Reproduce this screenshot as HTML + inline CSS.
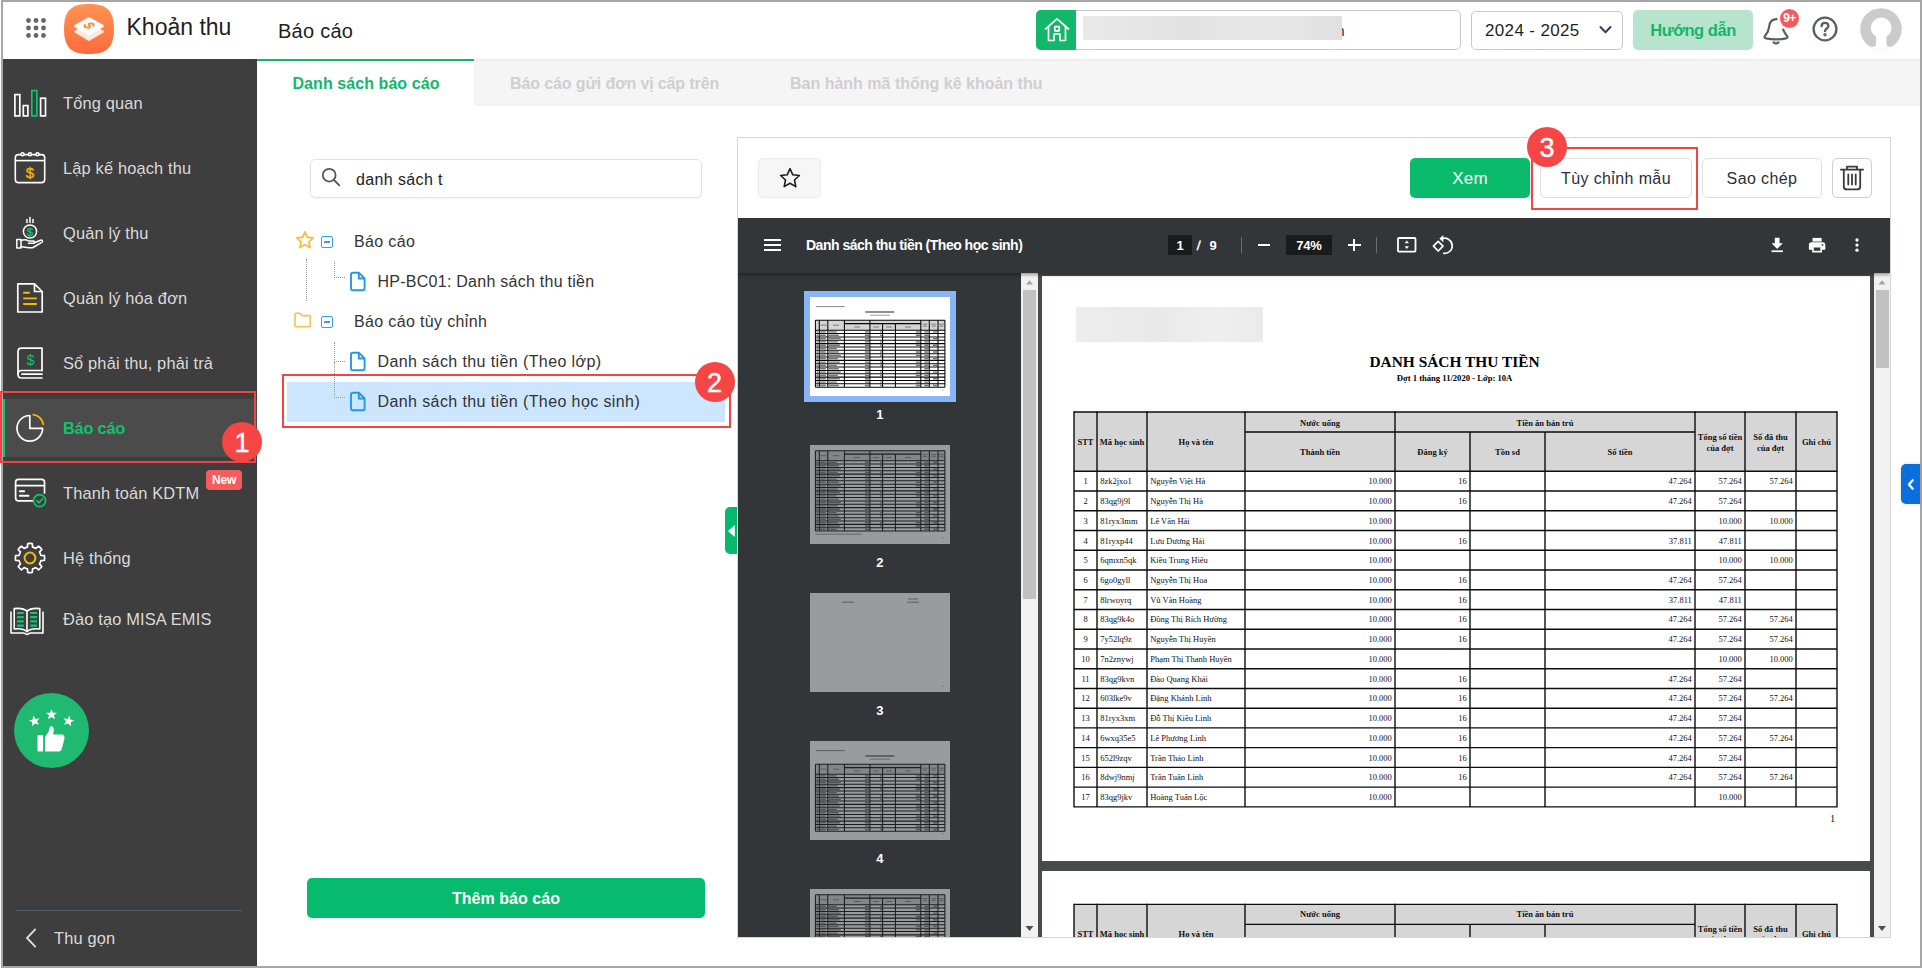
<!DOCTYPE html>
<html lang="vi">
<head>
<meta charset="utf-8">
<title>Khoản thu - Báo cáo</title>
<style>
*{box-sizing:border-box;margin:0;padding:0}
html,body{width:1922px;height:968px;overflow:hidden;background:#fff}
body{position:relative;font-family:"Liberation Sans",sans-serif;color:#212121;font-size:16px}
.abs{position:absolute}
.frame{position:absolute;background:#a6a6a6}
/* header */
#hdr{position:absolute;left:3px;top:2px;width:1917px;height:57px;background:#fff}
.t{position:absolute;white-space:nowrap;line-height:1}
/* sidebar */
#side{position:absolute;left:3px;top:59px;width:254px;height:907px;background:#3e3e3e}
.mi{position:absolute;left:60px;color:#dadada;font-size:16.4px;letter-spacing:.16px;white-space:nowrap;line-height:20px}
.ic{position:absolute}
/* tabs */
#tabs{position:absolute;left:257px;top:59px;width:1663px;height:47px;background:#f5f5f5;border-bottom:1px solid #f0f0f0;box-shadow:inset 0 3px 3px -2px rgba(0,0,0,.06)}
#tab1{position:absolute;left:0;top:0;width:217px;height:47px;background:#fff;border-top:2px solid #12b76a}
.tab{position:absolute;top:0;font-weight:bold;font-size:16px;line-height:47px;white-space:nowrap}
/* left panel */
.row{position:absolute;margin-top:1px;font-size:16px;line-height:20px;color:#333;white-space:nowrap}
.btn{position:absolute;border:1px solid #e0e0e0;border-radius:5px;background:#fff;text-align:center;font-size:16px;color:#2b2f3a;white-space:nowrap}
.red{position:absolute;border:2px solid #f24444}
.num{position:absolute;width:40px;height:40px;border-radius:50%;background:#f54545;color:#fff;text-align:center;font-size:27px;line-height:43px;-webkit-text-stroke:.45px #fff}
/* pdf */
#pdfbar{position:absolute;left:738px;top:218px;width:1152px;height:55px;background:#323639;color:#fff}
#thumbs{position:absolute;left:738px;top:273px;width:283px;height:664px;background:#323639;overflow:hidden}
#pdfmain{position:absolute;left:1038px;top:273px;width:836px;height:664px;background:#474b4e;overflow:hidden}
.sb{position:absolute;background:#f1f1f1}
.page{position:absolute;left:4px;width:828px;background:#fff;font-family:"Liberation Serif",serif;color:#000}
table.rp{position:absolute;border-collapse:collapse;table-layout:fixed;font-family:"Liberation Serif",serif;font-size:8.6px;color:#111}
table.rp td,table.rp th{border:1.5px solid #111;padding:0 3px;overflow:hidden;white-space:nowrap;line-height:10px}
table.rp th{background:#d6d6d6;font-weight:bold;text-align:center;white-space:normal}
table.rp td.r{text-align:right}
table.rp td.c{text-align:center}

.hc{position:absolute;padding-top:2px;display:flex;align-items:center;justify-content:center;text-align:center;font-weight:bold;font-size:8.5px;line-height:10.4px;color:#111}
.dc{position:absolute;margin-top:1px;height:19.74px;line-height:19.74px;font-size:8.5px;white-space:nowrap;color:#111;padding:0 3.2px}
.dc.c{text-align:center;padding:0}.dc.r{text-align:right}.dc.l{text-align:left}
.ptitle{position:absolute;left:0;width:828px;text-align:center;font-weight:bold;font-size:15.4px;line-height:18px;left:-1.5px}
.psub{position:absolute;left:-1.5px;width:828px;text-align:center;font-weight:bold;font-size:8.6px;line-height:10px}
</style>
</head>
<body>
<!-- frame -->
<div class="frame" style="left:1px;top:0;width:1921px;height:2px"></div>
<div class="frame" style="left:1px;top:0;width:2px;height:968px"></div>
<div class="frame" style="left:1920px;top:0;width:2px;height:968px"></div>
<div class="frame" style="left:1px;top:966px;width:1921px;height:2px"></div>

<div id="hdr">
<svg class="abs" style="left:21px;top:14px" width="24" height="24" viewBox="0 0 24 24" fill="#666">
<circle cx="4.5" cy="4.5" r="2.4"/><circle cx="12" cy="4.5" r="2.4"/><circle cx="19.5" cy="4.5" r="2.4"/>
<circle cx="4.5" cy="12" r="2.4"/><circle cx="12" cy="12" r="2.4"/><circle cx="19.5" cy="12" r="2.4"/>
<circle cx="4.5" cy="19.5" r="2.4"/><circle cx="12" cy="19.5" r="2.4"/><circle cx="19.5" cy="19.5" r="2.4"/>
</svg>
<svg class="abs" style="left:61px;top:2px" width="50" height="50" viewBox="0 0 50 50">
<defs><linearGradient id="og" x1="0" y1="0" x2="0" y2="1"><stop offset="0" stop-color="#ff9352"/><stop offset="1" stop-color="#ff6a3e"/></linearGradient>
<linearGradient id="wg" x1="0" y1="0" x2="0" y2="1"><stop offset="0" stop-color="#fff"/><stop offset="1" stop-color="#ffe9dc"/></linearGradient></defs>
<path d="M25 0C40 0 50 4 50 25S40 50 25 50 0 46 0 25 10 0 25 0Z" fill="url(#og)"/>
<path d="M25 20 L38.8 27.6 L25 35.8 L11.2 27.6Z" fill="#ffe9dd" stroke="#ffe9dd" stroke-width="2.2" stroke-linejoin="round"/>
<path d="M25 14.2 L38.8 22 L25 30.2 L11.2 22Z" fill="#fff" stroke="#fff" stroke-width="2.2" stroke-linejoin="round"/>
<text x="0" y="5.4" font-family="Liberation Sans, sans-serif" font-weight="bold" font-size="16" fill="#ff8a1f" text-anchor="middle" transform="translate(25.3 21.6) scale(1 .6) rotate(58)">$</text>
</svg>
<div class="t" style="left:123.5px;top:14px;font-size:23px;color:#1f1f1f">Khoản thu</div>
<div class="t" style="left:275px;top:19px;font-size:20px;letter-spacing:.25px;color:#1f1f1f">Báo cáo</div>

<!-- school selector -->
<div class="abs" style="left:1033px;top:8px;width:425px;height:40px;border:1px solid #c9c9c9;border-radius:5px;background:#fff"></div>
<div class="abs" style="left:1033px;top:8px;width:40px;height:40px;background:#12b76a;border-radius:5px 0 0 5px"></div>
<svg class="abs" style="left:1041px;top:15px" width="26" height="26" viewBox="0 0 26 26" fill="none" stroke="#fff" stroke-width="1.7" stroke-linejoin="round" stroke-linecap="round">
<path d="M1.5 12 L13 1.8 L24.5 12"/><path d="M4.5 9.8 V23.5 H10 V17 H16 V23.5 H21.500000000000004 V9.8"/><rect x="10.8" y="9.6" width="4.4" height="4.2"/>
</svg>
<div class="abs" style="left:1080px;top:14px;width:259px;height:24px;background:linear-gradient(90deg,#e9e9e9,#e2e2e2 40%,#e8e8e8 70%,#e0e0e0)"></div>
<div class="t" style="left:1339px;top:22px;font-size:14px;color:#222;width:2.5px;overflow:hidden;direction:rtl">n</div>

<!-- year -->
<div class="abs" style="left:1468px;top:9px;width:152px;height:39px;border:1px solid #c9c9c9;border-radius:5px;background:#fff"></div>
<div class="t" style="left:1482px;top:20px;font-size:17px;letter-spacing:.35px;color:#1f1f1f">2024 - 2025</div>
<svg class="abs" style="left:1596px;top:23px" width="13" height="10" viewBox="0 0 13 10" fill="none" stroke="#3c3c5a" stroke-width="2" stroke-linecap="round" stroke-linejoin="round"><path d="M1.5 2 L6.5 7.2 L11.5 2"/></svg>

<!-- guide -->
<div class="abs" style="left:1630px;top:8px;width:120px;height:40px;border-radius:5px;background:#b8e4cd"></div>
<div class="t" style="left:1630px;top:20px;width:120px;text-align:center;font-size:16.5px;font-weight:bold;color:#12b76a;letter-spacing:-.45px">Hướng dẫn</div>

<!-- bell -->
<svg class="abs" style="left:1758px;top:14px" width="30" height="32" viewBox="0 0 30 32" fill="none" stroke="#5a5e67" stroke-width="2.2" stroke-linecap="round" stroke-linejoin="round">
<path d="M15.6 3.2 C10.8 3.2 8.6 6.6 8.2 10.6 C7.8 15 6 17.6 4 20 C3.2 21 3.6 22 4.800000000000001 22.3 C11 23.6 19 23.6 25.200000000000003 22.3 C26.400000000000002 22 26.8 21 26 20 C24.5 18 23 16 22.2 13.6"/>
<path d="M12.6 26.4 C13.4 27.200000000000003 14.2 27.5 15 27.5 S16.6 27.200000000000003 17.400000000000002 26.4"/>
</svg>
<div class="abs" style="left:1777px;top:6.7px;width:19.4px;height:19.4px;border-radius:50%;background:#f8585b"></div>
<div class="t" style="left:1776.5px;top:9.5px;width:20px;text-align:center;font-size:12px;font-weight:bold;color:#fff;letter-spacing:-.6px">9+</div>

<!-- help -->
<svg class="abs" style="left:1808px;top:13px" width="28" height="28" viewBox="0 0 28 28" fill="none" stroke="#5a5e67" stroke-width="2.3" stroke-linecap="round"><circle cx="14" cy="14" r="11.4"/>
<path d="M10.6 11.2 C10.6 9.1 12.1 7.9 14 7.9 S17.4 9.1 17.4 11 C17.4 13.400000000000002 14 13.600000000000001 14 16.2"/><circle cx="14" cy="19.8" r=".6" fill="#5a5e67"/></svg>

<!-- avatar -->
<svg class="abs" style="left:1857px;top:5.5px" width="42" height="42" viewBox="0 0 42 42">
<defs><clipPath id="avc"><circle cx="21" cy="21" r="20.8"/></clipPath></defs>
<circle cx="21" cy="21" r="20.8" fill="#cbcbcb"/>
<g clip-path="url(#avc)" fill="#fff"><circle cx="21.2" cy="19.8" r="10.3"/><path d="M15.4 26 C16.6 31 16.4 35 15 40 H27.6 C26.2 35 26 31 27.2 26Z"/><rect x="0" y="38.7" width="42" height="4"/></g>
</svg>
</div>
<div id="side">
<!-- active item -->
<div class="abs" style="left:0;top:340px;width:254px;height:58px;background:#4b4b4b"></div>
<div class="abs" style="left:0;top:340px;width:1.5px;height:58px;background:#12c26d"></div>

<!-- 1 Tong quan -->
<svg class="ic" style="left:10px;top:29px" width="34" height="30" viewBox="0 0 34 30" fill="none" stroke="#fff" stroke-width="1.7">
<rect x="1.9" y="6.6" width="4.9" height="21.3"/><rect x="10.3" y="17.6" width="4.6" height="10.3"/><rect x="18.8" y="2.6" width="5" height="25.3" stroke="#12c26d"/><rect x="27.600000000000005" y="10.2" width="4.9" height="17.700000000000003"/>
</svg>
<div class="mi" style="top:34px">Tổng quan</div>

<!-- 2 Lap ke hoach thu -->
<svg class="ic" style="left:10px;top:91px" width="34" height="36" viewBox="0 0 34 36" fill="none" stroke="#fff" stroke-width="1.6">
<rect x="2.3" y="4.6" width="29.4" height="28" rx="3.2"/><path d="M2.3 10.6 H31.7"/>
<circle cx="9.5" cy="4.3" r="1.5" fill="#3e3e3e"/><circle cx="17" cy="4.3" r="1.5" fill="#3e3e3e"/><circle cx="24.5" cy="4.3" r="1.5" fill="#3e3e3e"/>
<text x="17" y="27.6" stroke="#f5b800" stroke-width=".35" fill="#f5b800" font-family="Liberation Sans, sans-serif" font-size="15" text-anchor="middle">$</text>
</svg>
<div class="mi" style="top:99px">Lập kế hoạch thu</div>

<!-- 3 Quan ly thu -->
<svg class="ic" style="left:11px;top:157px" width="32" height="34" viewBox="0 0 32 34" fill="none" stroke="#fff" stroke-width="1.5" stroke-linecap="round" stroke-linejoin="round">
<path d="M13 3.5 V6.5 M16 1.5 V6.5 M19 3.5 V6.5"/>
<circle cx="16" cy="15.5" r="6.6"/>
<text x="16" y="19.8" stroke="#12c26d" stroke-width=".3" fill="#12c26d" font-family="Liberation Sans, sans-serif" font-size="11.5" text-anchor="middle">$</text>
<rect x="2.8" y="23.5" width="4.2" height="8.5"/>
<path d="M7 24.6 C10 23.2 12.5 23.6 14.5 25 H19.5 C21 25 21 27.300000000000004 19.5 27.300000000000004 H14.5 M19.8 27 L26.5 24.2 C28.3 23.6 29.3 25.4 27.8 26.400000000000002 L19 31.5 C17 32.4 13 31.2 7 30.8"/>
</svg>
<div class="mi" style="top:164px">Quản lý thu</div>

<!-- 4 Quan ly hoa don -->
<svg class="ic" style="left:12px;top:222px" width="30" height="34" viewBox="0 0 30 34" fill="none" stroke="#fff" stroke-width="1.7" stroke-linejoin="round">
<path d="M2.8 2.8 H19.5 L27.200000000000003 10.5 V31 H2.8Z"/><path d="M19.5 2.8 V10.5 H27.200000000000003"/>
<path d="M8.2 11.8 H14.8 M8.2 17.4 H21.8 M8.2 23 H21.8" stroke="#f5b800" stroke-width="1.9"/>
</svg>
<div class="mi" style="top:229px">Quản lý hóa đơn</div>

<!-- 5 So phai thu -->
<svg class="ic" style="left:12px;top:286px" width="30" height="36" viewBox="0 0 30 36" fill="none" stroke="#fff" stroke-width="1.7" stroke-linejoin="round" stroke-linecap="round">
<path d="M27 25.5 V3.2 H6.5 C4.5 3.2 3 4.7 3 6.7 V29"/>
<path d="M27 25.5 H6.5 C1.8 25.5 1.8 33 6.5 33 H27 M27 29.2 H7"/>
<text x="15.5" y="19.5" stroke="none" fill="#12c26d" font-family="Liberation Sans, sans-serif" font-size="14.5" text-anchor="middle">$</text>
</svg>
<div class="mi" style="top:294px">Sổ phải thu, phải trả</div>

<!-- 6 Bao cao -->
<svg class="ic" style="left:11px;top:353px" width="32" height="32" viewBox="0 0 32 32" fill="none" stroke="#fff" stroke-width="1.7" stroke-linecap="round" stroke-linejoin="round">
<path d="M15.8 3.5 A12.8 12.8 0 1 0 28.6 16.3 H15.8 Z"/>
<path d="M19.3 2.6 A12.4 12.4 0 0 1 29.3 12.2" stroke="#f5b800"/>
</svg>
<div class="mi" style="top:359px;color:#12c26d;font-weight:bold;letter-spacing:-.25px">Báo cáo</div>

<!-- 7 Thanh toan KDTM -->
<svg class="ic" style="left:10px;top:417px" width="36" height="34" viewBox="0 0 36 34" fill="none" stroke="#fff" stroke-width="1.7" stroke-linecap="round" stroke-linejoin="round">
<path d="M23 24.8 H5.5 C3.8 24.8 2.6 23.6 2.6 22 V6.2 C2.6 4.6 3.8 3.4 5.5 3.4 H28.6 C30.200000000000003 3.4 31.5 4.6 31.5 6.2 V17"/>
<path d="M2.6 9.6 H31.5"/><path d="M6.8 15.2 H11.2 M6.8 19.8 H15.5" stroke-width="1.9"/>
<circle cx="26.6" cy="24.6" r="6" stroke="#12c26d" fill="#3e3e3e"/><path d="M23.8 24.6 L26 26.8 L29.6 22.8" stroke="#12c26d"/>
</svg>
<div class="mi" style="top:424px">Thanh toán KDTM</div>
<div class="abs" style="left:203px;top:411px;width:36px;height:20px;border-radius:4px;background:#f35d5d"></div>
<div class="t" style="left:203px;top:415px;width:36px;text-align:center;font-size:12px;color:#fff;font-weight:bold;letter-spacing:-.2px">New</div>

<!-- 8 He thong -->
<svg class="ic" style="left:10px;top:482px" width="34" height="34" viewBox="0 0 34 34" fill="none" stroke="#fff" stroke-width="1.7" stroke-linejoin="round">
<path d="M14.39 6.11L14.72 2.58A14.6 14.6 0 0 1 19.28 2.58L19.61 6.11A11.2 11.2 0 0 1 22.85 7.45L25.58 5.19A14.6 14.6 0 0 1 28.81 8.42L26.55 11.15A11.2 11.2 0 0 1 27.89 14.39L31.42 14.72A14.6 14.6 0 0 1 31.42 19.28L27.89 19.61A11.2 11.2 0 0 1 26.55 22.85L28.81 25.58A14.6 14.6 0 0 1 25.58 28.81L22.85 26.55A11.2 11.2 0 0 1 19.61 27.89L19.28 31.42A14.6 14.6 0 0 1 14.72 31.42L14.39 27.89A11.2 11.2 0 0 1 11.15 26.55L8.42 28.81A14.6 14.6 0 0 1 5.19 25.58L7.45 22.85A11.2 11.2 0 0 1 6.11 19.61L2.58 19.28A14.6 14.6 0 0 1 2.58 14.72L6.11 14.39A11.2 11.2 0 0 1 7.45 11.15L5.19 8.42A14.6 14.6 0 0 1 8.42 5.19L11.15 7.45A11.2 11.2 0 0 1 14.39 6.11Z"/>
<circle cx="17" cy="17" r="5.4" stroke="#f5b800" stroke-width="2"/>
</svg>
<div class="mi" style="top:489px">Hệ thống</div>

<!-- 9 Dao tao -->
<svg class="ic" style="left:6px;top:547px" width="36" height="30" viewBox="0 0 36 30" fill="none" stroke="#fff" stroke-width="1.6" stroke-linejoin="round">
<path d="M2 5.5 V27 H14.5 C16 27 16.5 28.400000000000002 18 28.400000000000002 S20 27 21.5 27 H34 V5.5"/>
<path d="M18 5.200000000000001 C15 2.4 10 2 5.2 2.6 V23 C10 22.4 15 22.8 18 25.6 C21 22.8 26 22.4 30.8 23 V2.6 C26 2 21 2.4 18 5.200000000000001 Z M18 5.200000000000001 V25.6"/>
<path d="M8 7 H14.8 M8 11.2 H14.8 M8 15.4 H14.8 M8 19.6 H14.8 M21.2 7 H28 M21.2 11.2 H28 M21.2 15.4 H28 M21.2 19.6 H28" stroke="#12c26d" stroke-width="2.2"/>
</svg>
<div class="mi" style="top:550px">Đào tạo MISA EMIS</div>

<!-- feedback -->
<div class="abs" style="left:11px;top:634px;width:75px;height:75px;border-radius:50%;background:#1fb971"></div>
<svg class="abs" style="left:11px;top:634px" width="75" height="75" viewBox="0 0 75 75" fill="#fff">
<g id="st"><path d="M0 -5.6 L1.5 -1.8 L5.5 -1.7 L2.4 0.8 L3.5 4.7 L0 2.5 L-3.5 4.7 L-2.4 0.8 L-5.5 -1.7 L-1.5 -1.8Z" transform="translate(37.5 21.5)"/></g>
<path d="M0 -5.6 L1.5 -1.8 L5.5 -1.7 L2.4 0.8 L3.5 4.7 L0 2.5 L-3.5 4.7 L-2.4 0.8 L-5.5 -1.7 L-1.5 -1.8Z" transform="translate(20.5 28) rotate(-12)"/>
<path d="M0 -5.6 L1.5 -1.8 L5.5 -1.7 L2.4 0.8 L3.5 4.7 L0 2.5 L-3.5 4.7 L-2.4 0.8 L-5.500000000000001 -1.7 L-1.5 -1.8Z" transform="translate(54.5 28) rotate(12)"/>
<rect x="23.5" y="42" width="5.6" height="16.5" rx="1"/>
<path d="M31 58.5 V43.5 C33.5 41 35 38 35.800000000000004 34.5 C36.2 32.6 39.6 33 39.800000000000004 36 C39.900000000000006 38 39.5 40 39 41.6 H47.5 C50 41.6 51 43.800000000000004 50.400000000000006 45.800000000000004 L47.800000000000004 56 C47.400000000000006 57.6 46.2 58.5 44.5 58.5Z"/>
</svg>

<!-- divider + collapse -->
<div class="abs" style="left:13px;top:851px;width:226px;height:1px;background:#4e6072"></div>
<svg class="abs" style="left:21px;top:868px" width="14" height="22" viewBox="0 0 14 22" fill="none" stroke="#d9d9e3" stroke-width="1.9" stroke-linecap="square"><path d="M11 2.6 L3 11 L11 19.400000000000002"/></svg>
<div class="mi" style="left:51px;top:869px">Thu gọn</div>
</div>
<div id="tabs"><div id="tab1"></div>
<div class="tab" style="left:35.5px;color:#12b76a;letter-spacing:.07px;top:.5px">Danh sách báo cáo</div>
<div class="tab" style="left:253px;color:#cfcfcf;letter-spacing:-.12px;top:.5px">Báo cáo gửi đơn vị cấp trên</div>
<div class="tab" style="left:533px;color:#cfcfcf;top:.5px">Ban hành mã thống kê khoản thu</div>
</div>

<!-- LEFT PANEL -->
<div class="abs" style="left:310px;top:159px;width:392px;height:39px;border:1px solid #e3e3e3;border-radius:5px;background:#fff;box-shadow:0 1px 2px rgba(0,0,0,.05)"></div>
<svg class="abs" style="left:320px;top:166px" width="22" height="22" viewBox="0 0 22 22" fill="none" stroke="#555" stroke-width="1.8" stroke-linecap="round"><circle cx="9.2" cy="9.2" r="6.4"/><path d="M14 14 L19.3 19.3"/></svg>
<div class="row" style="left:356px;top:169px;letter-spacing:.38px;color:#222">danh sách t</div>

<!-- tree -->
<svg class="abs" style="left:295px;top:230px" width="20" height="20" viewBox="0 0 22 22" fill="none" stroke="#f7bd45" stroke-width="2" stroke-linejoin="round"><path d="M11 2.2 L13.7 8 L20 8.7 L15.3 13 L16.6 19.3 L11 16.1 L5.4 19.3 L6.7 13 L2 8.7 L8.3 8Z"/></svg>
<div class="abs" style="left:321px;top:236px;width:11.5px;height:11.5px;border:1.6px solid #3b9de8;border-radius:2px"></div>
<div class="abs" style="left:323.6px;top:241px;width:6.3px;height:1.6px;background:#3b9de8"></div>
<div class="row" style="left:354px;top:231px;letter-spacing:.35px">Báo cáo</div>

<div class="abs" style="left:306px;top:259px;width:0;height:42px;border-left:1px dotted #999"></div>
<div class="abs" style="left:333.5px;top:261px;width:11px;height:17px;border-left:1px dotted #999;border-bottom:1px dotted #999"></div>
<svg class="abs doc" style="left:349px;top:271px" width="18" height="21" viewBox="0 0 18 21" fill="none" stroke="#2196f3" stroke-width="1.9" stroke-linejoin="round"><path d="M2 3.4 C2 2.4 2.7 1.7 3.7 1.7 H9.8 L15.6 7.5 V17.6 C15.6 18.6 14.9 19.3 13.9 19.3 H3.7 C2.7 19.3 2 18.6 2 17.6Z"/><path d="M9.8 1.7 V7.5 H15.6"/></svg>
<div class="row" style="left:377.5px;top:271px;letter-spacing:.26px">HP-BC01: Danh sách thu tiền</div>

<svg class="abs" style="left:293px;top:311px" width="20" height="18" viewBox="0 0 20 18" fill="none" stroke="#f7c04a" stroke-width="1.6" stroke-linejoin="round"><path d="M2 3.2 C2 2.6 2.5 2.2 3 2.2 H7 L9 4.6 H16.3 C16.9 4.6 17.3 5 17.3 5.6 V14.8 C17.3 15.4 16.9 15.8 16.3 15.8 H3 C2.4 15.8 2 15.4 2 14.8Z"/></svg>
<div class="abs" style="left:321px;top:316px;width:11.5px;height:11.5px;border:1.6px solid #3b9de8;border-radius:2px"></div>
<div class="abs" style="left:323.6px;top:321px;width:6.3px;height:1.6px;background:#3b9de8"></div>
<div class="row" style="left:354px;top:311px;letter-spacing:.35px">Báo cáo tùy chỉnh</div>

<div class="abs" style="left:287px;top:382px;width:438px;height:40px;background:#cce6ff"></div>
<div class="abs" style="left:333.5px;top:342px;width:11px;height:20px;border-left:1px dotted #999;border-bottom:1px dotted #999"></div>
<div class="abs" style="left:333.5px;top:362px;width:11px;height:36px;border-left:1px dotted #999;border-bottom:1px dotted #999"></div>
<svg class="abs doc" style="left:349px;top:351px" width="18" height="21" viewBox="0 0 18 21" fill="none" stroke="#2196f3" stroke-width="1.9" stroke-linejoin="round"><path d="M2 3.4 C2 2.4 2.7 1.7 3.7 1.7 H9.8 L15.6 7.5 V17.6 C15.6 18.6 14.9 19.3 13.9 19.3 H3.7 C2.7 19.3 2 18.6 2 17.6Z"/><path d="M9.8 1.7 V7.5 H15.6"/></svg>
<div class="row" style="left:377.5px;top:351px;letter-spacing:.4px">Danh sách thu tiền (Theo lớp)</div>
<svg class="abs doc" style="left:349px;top:391px" width="18" height="21" viewBox="0 0 18 21" fill="none" stroke="#2196f3" stroke-width="1.9" stroke-linejoin="round"><path d="M2 3.4 C2 2.4 2.7 1.7 3.7 1.7 H9.8 L15.6 7.5 V17.6 C15.6 18.6 14.9 19.3 13.9 19.3 H3.7 C2.7 19.3 2 18.6 2 17.6Z"/><path d="M9.8 1.7 V7.5 H15.6"/></svg>
<div class="row" style="left:377.5px;top:391px;letter-spacing:.4px">Danh sách thu tiền (Theo học sinh)</div>

<div class="abs" style="left:307px;top:878px;width:398px;height:40px;border-radius:5px;background:#06bb6e"></div>
<div class="t" style="left:307px;top:891px;width:398px;text-align:center;font-size:16px;font-weight:bold;color:#fff;letter-spacing:.05px">Thêm báo cáo</div>

<!-- splitter handle -->
<div class="abs" style="left:725px;top:507px;width:12.5px;height:47px;border-radius:5px 0 0 5px;background:#06b96f"></div>
<svg class="abs" style="left:727px;top:524px" width="9" height="14" viewBox="0 0 9 14"><path d="M7.800000000000001 1 V13 L1 7Z" fill="#fff"/></svg>

<!-- annotations left -->
<div class="red" style="left:0;top:391px;width:256px;height:72px"></div>
<div class="num" style="left:222px;top:421.5px">1</div>
<div class="red" style="left:282px;top:373.5px;width:449px;height:54px"></div>
<div class="num" style="left:694.5px;top:362px">2</div>

<!-- RIGHT PANEL -->
<div id="rp">
<div class="abs" style="left:737px;top:137px;width:1154px;height:801px;border:1px solid #d6d6d6;background:#fff"></div>
<div class="btn" style="left:758px;top:158px;width:63px;height:40px;background:#f6f6f6;border-color:#ebebeb"></div>
<svg class="abs" style="left:778px;top:166px" width="24" height="24" viewBox="0 0 24 24" fill="none" stroke="#1d1d1d" stroke-width="1.6" stroke-linejoin="round"><path d="M12 2.7 L14.800000000000001 8.8 L21.400000000000002 9.5 L16.5 14 L17.8 20.6 L12 17.3 L6.2 20.6 L7.5 14 L2.6 9.5 L9.2 8.8Z"/></svg>

<div class="abs" style="left:1410px;top:158px;width:120px;height:40px;border-radius:5px;background:#0abb6c"></div>
<div class="t" style="left:1410px;top:170px;width:120px;text-align:center;color:#fff;font-size:17px;letter-spacing:.2px">Xem</div>
<div class="btn" style="left:1540px;top:158px;width:152px;height:40px;line-height:40px;letter-spacing:.38px">Tùy chỉnh mẫu</div>
<div class="btn" style="left:1702px;top:158px;width:120px;height:40px;line-height:40px;letter-spacing:.4px">Sao chép</div>
<div class="btn" style="left:1832px;top:158px;width:40px;height:40px;border-color:#cfcfcf"></div>
<svg class="abs" style="left:1839px;top:164px" width="26" height="28" viewBox="0 0 26 28" fill="none" stroke="#3a3a3a" stroke-width="1.8" stroke-linecap="round" stroke-linejoin="round"><path d="M1.8 5.6 H24.2"/><path d="M8 5.2 V2.6 H18 V5.2"/><path d="M4.8 5.8 V22.4 C4.8 24.4 6 25.4 7.800000000000001 25.4 H18.2 C20 25.4 21.200000000000003 24.4 21.200000000000003 22.4 V5.8"/><path d="M9.3 10.4 V20.6 M13 10.4 V20.6 M16.7 10.4 V20.6"/></svg>

<!-- pdf toolbar -->
<div id="pdfbar" style="box-shadow:0 2px 3px rgba(0,0,0,.35);z-index:3;clip-path:inset(0 0 -6px 0)">
<div class="abs" style="left:26px;top:21px;width:16.5px;height:2px;background:#fff;box-shadow:0 5px 0 #fff,0 10px 0 #fff"></div>
<div class="t" style="left:68px;top:20px;font-size:14px;font-weight:bold;letter-spacing:-.5px;color:#fff">Danh sách thu tiền (Theo học sinh)</div>
<div class="abs" style="left:430px;top:17px;width:24px;height:20px;background:#191b1c"></div>
<div class="t" style="left:430px;top:21px;width:24px;text-align:center;font-size:13px;font-weight:bold">1</div>
<div class="t" style="left:458.5px;top:21px;font-size:13px;font-weight:bold;transform:skewX(-8deg)">/</div><div class="t" style="left:471.5px;top:21px;font-size:13px;font-weight:bold">9</div>
<div class="abs" style="left:503px;top:19px;width:1px;height:16px;background:#6b6e70"></div>
<div class="abs" style="left:520px;top:26.2px;width:12px;height:1.7px;background:#fff"></div>
<div class="abs" style="left:548px;top:17px;width:46px;height:20px;background:#191b1c"></div>
<div class="t" style="left:548px;top:21px;width:46px;text-align:center;font-size:13px;font-weight:bold;letter-spacing:-.2px">74%</div>
<div class="abs" style="left:610px;top:26.2px;width:12.5px;height:1.7px;background:#fff"></div>
<div class="abs" style="left:615.4px;top:20.8px;width:1.7px;height:12.5px;background:#fff"></div>
<div class="abs" style="left:638px;top:19px;width:1px;height:16px;background:#6b6e70"></div>
<svg class="abs" style="left:658px;top:18px" width="22" height="18" viewBox="0 0 22 18" fill="none" stroke="#fff" stroke-width="1.8" stroke-linejoin="round"><rect x="2" y="2" width="17.5" height="13.6" rx="1"/><path d="M10.8 4.6 L13 7.3 H8.6Z M10.8 13 L13 10.3 H8.6Z" fill="#fff" stroke="none"/></svg>
<svg class="abs" style="left:693px;top:16px" width="22" height="22" viewBox="0 0 22 22" fill="none" stroke="#fff" stroke-width="1.7" stroke-linejoin="round"><path d="M7.2 7.400000000000001 L12 12.2 L7.2 17 L2.4 12.2Z"/><path d="M11.3 4.6 A7.6 7.6 0 1 1 12.8 19.400000000000002" stroke-linecap="round"/><path d="M12.3 1 V8.2 L8.4 4.6Z" fill="#fff" stroke="none"/></svg>
<svg class="abs" style="left:1030.8px;top:18px" width="16.4" height="18.2" viewBox="0 0 18 20" fill="#fff"><path d="M6.4 2 H11.6 V8 H15.2 L9 14.2 L2.8 8 H6.4Z"/><rect x="2.8" y="15.8" width="12.4" height="1.9"/></svg>
<svg class="abs" style="left:1069.8px;top:18.6px" width="18.2" height="16.4" viewBox="0 0 20 18" fill="#fff"><rect x="5" y="1" width="10" height="4"/><path d="M3.6 5.800000000000001 H16.4 C18 5.800000000000001 19 6.800000000000001 19 8.4 V14 H15.4 V17 H4.6 V14 H1 V8.4 C1 6.800000000000001 2 5.800000000000001 3.6 5.800000000000001Z M6.4 11.6 V15.2 H13.6 V11.6Z M15.9 7.7 A1 1 0 1 0 15.9 9.7 A1 1 0 1 0 15.9 7.7Z" fill-rule="evenodd"/></svg>
<svg class="abs" style="left:1115px;top:18px" width="8" height="20" viewBox="0 0 8 20" fill="#fff"><circle cx="4" cy="4" r="1.65"/><circle cx="4" cy="9.1" r="1.65"/><circle cx="4" cy="14.2" r="1.65"/></svg>
</div>

<div id="thumbs">
<div class="abs" style="left:66px;top:17.8px;width:152px;height:111px;background:#8ab4f8"></div><div class="abs" style="left:71.8px;top:23.7px;width:140.5px;height:99px;"><svg class="abs" style="left:0;top:0" width="140.5" height="99" viewBox="0 0 140.5 99" fill="none"><rect width="140.5" height="99" fill="#fff"/><path d="M5.7 9.6 H34.7" stroke="#555" stroke-width=".7"/><path d="M55.3 15 H84.3" stroke="#333" stroke-width="1.1"/><path d="M60 18.2 H80" stroke="#777" stroke-width=".7"/><rect x="5.4" y="23.2" width="129.5" height="10.0" fill="#d4d4d4"/><path d="M6.4 34.88 H8.3 M10.1 34.88 H15.8 M18.6 34.88 H26.8 M54.9 34.88 H59.1 M70.1 34.88 H71.8 M105.8 34.88 H110.0 M114.3 34.88 H118.5 M123.0 34.88 H127.2 M6.4 38.23 H8.3 M10.1 38.23 H15.8 M18.6 38.23 H28.8 M54.9 38.23 H59.1 M70.1 38.23 H71.8 M105.8 38.23 H110.0 M114.3 38.23 H118.5 M6.4 41.58 H8.3 M10.1 41.58 H15.8 M18.6 41.58 H30.8 M54.9 41.58 H59.1 M114.3 41.58 H118.5 M123.0 41.58 H127.2 M6.4 44.92 H8.3 M10.1 44.92 H15.8 M18.6 44.92 H27.8 M54.9 44.92 H59.1 M70.1 44.92 H71.8 M105.8 44.92 H110.0 M114.3 44.92 H118.5 M6.4 48.27 H8.3 M10.1 48.27 H15.8 M18.6 48.27 H29.8 M54.9 48.27 H59.1 M70.1 48.27 H71.8 M105.8 48.27 H110.0 M114.3 48.27 H118.5 M123.0 48.27 H127.2 M6.4 51.62 H8.3 M10.1 51.62 H15.8 M18.6 51.62 H26.8 M54.9 51.62 H59.1 M114.3 51.62 H118.5 M6.4 54.98 H8.3 M10.1 54.98 H15.8 M18.6 54.98 H28.8 M54.9 54.98 H59.1 M70.1 54.98 H71.8 M105.8 54.98 H110.0 M114.3 54.98 H118.5 M123.0 54.98 H127.2 M6.4 58.33 H8.3 M10.1 58.33 H15.8 M18.6 58.33 H30.8 M54.9 58.33 H59.1 M70.1 58.33 H71.8 M105.8 58.33 H110.0 M114.3 58.33 H118.5 M6.4 61.67 H8.3 M10.1 61.67 H15.8 M18.6 61.67 H27.8 M54.9 61.67 H59.1 M114.3 61.67 H118.5 M123.0 61.67 H127.2 M6.4 65.03 H8.3 M10.1 65.03 H15.8 M18.6 65.03 H29.8 M54.9 65.03 H59.1 M70.1 65.03 H71.8 M105.8 65.03 H110.0 M114.3 65.03 H118.5 M6.4 68.38 H8.3 M10.1 68.38 H15.8 M18.6 68.38 H26.8 M54.9 68.38 H59.1 M70.1 68.38 H71.8 M105.8 68.38 H110.0 M114.3 68.38 H118.5 M123.0 68.38 H127.2 M6.4 71.73 H8.3 M10.1 71.73 H15.8 M18.6 71.73 H28.8 M54.9 71.73 H59.1 M114.3 71.73 H118.5 M6.4 75.08 H8.3 M10.1 75.08 H15.8 M18.6 75.08 H30.8 M54.9 75.08 H59.1 M70.1 75.08 H71.8 M105.8 75.08 H110.0 M114.3 75.08 H118.5 M123.0 75.08 H127.2 M6.4 78.42 H8.3 M10.1 78.42 H15.8 M18.6 78.42 H27.8 M54.9 78.42 H59.1 M70.1 78.42 H71.8 M105.8 78.42 H110.0 M114.3 78.42 H118.5 M6.4 81.77 H8.3 M10.1 81.77 H15.8 M18.6 81.77 H29.8 M54.9 81.77 H59.1 M114.3 81.77 H118.5 M123.0 81.77 H127.2 M6.4 85.12 H8.3 M10.1 85.12 H15.8 M18.6 85.12 H26.8 M54.9 85.12 H59.1 M70.1 85.12 H71.8 M105.8 85.12 H110.0 M114.3 85.12 H118.5 M6.4 88.48 H8.3 M10.1 88.48 H15.8 M18.6 88.48 H28.8 M54.9 88.48 H59.1 M70.1 88.48 H71.8 M105.8 88.48 H110.0 M114.3 88.48 H118.5 M123.0 88.48 H127.2" stroke="#777" stroke-width="1.3"/><path d="M10.6 28.2 H16.6 M23.1 28.2 H29.1 M44.1 30.0 H50.1 M63.2 30.0 H69.2 M76.0 30.0 H82.0 M95.1 30.0 H101.1 M112.5 27.2 H117.5 M113.0 29.2 H117.0 M121.2 27.2 H126.2 M121.7 29.2 H125.7 M128.9 27.2 H133.9 M129.4 29.2 H133.4" stroke="#666" stroke-width=".8"/><path d="M5.4 23.2 H134.9 M34.4 26.599999999999998 H110.8 M5.4 33.20 H134.9 M5.4 36.55 H134.9 M5.4 39.90 H134.9 M5.4 43.25 H134.9 M5.4 46.60 H134.9 M5.4 49.95 H134.9 M5.4 53.30 H134.9 M5.4 56.65 H134.9 M5.4 60.00 H134.9 M5.4 63.35 H134.9 M5.4 66.70 H134.9 M5.4 70.05 H134.9 M5.4 73.40 H134.9 M5.4 76.75 H134.9 M5.4 80.10 H134.9 M5.4 83.45 H134.9 M5.4 86.80 H134.9 M5.4 90.15 H134.9 M5.4 23.20 V90.15 M9.3 23.20 V90.15 M17.8 23.20 V90.15 M34.4 23.20 V90.15 M59.9 23.20 V90.15 M72.6 26.60 V90.15 M85.4 26.60 V90.15 M110.8 23.20 V90.15 M119.3 23.20 V90.15 M128 23.20 V90.15 M134.9 23.20 V90.15" stroke="#050505" stroke-width="1.05"/><path d="M132 93 H133.5" stroke="#888" stroke-width=".7"/></svg></div><div class="t" style="left:71.8px;top:135.2px;width:140.5px;text-align:center;color:#fff;font-size:13px;font-weight:bold;letter-spacing:.3px">1</div><div class="abs" style="left:71.8px;top:171.5px;width:140.5px;height:99px;opacity:.5;"><svg class="abs" style="left:0;top:0" width="140.5" height="99" viewBox="0 0 140.5 99" fill="none"><rect width="140.5" height="99" fill="#fff"/><rect x="5.4" y="5.7" width="129.5" height="10.0" fill="#d4d4d4"/><path d="M6.4 17.38 H8.3 M10.1 17.38 H15.8 M18.6 17.38 H26.8 M54.9 17.38 H59.1 M70.1 17.38 H71.8 M105.8 17.38 H110.0 M114.3 17.38 H118.5 M123.0 17.38 H127.2 M6.4 20.73 H8.3 M10.1 20.73 H15.8 M18.6 20.73 H28.8 M54.9 20.73 H59.1 M70.1 20.73 H71.8 M105.8 20.73 H110.0 M114.3 20.73 H118.5 M6.4 24.07 H8.3 M10.1 24.07 H15.8 M18.6 24.07 H30.8 M54.9 24.07 H59.1 M114.3 24.07 H118.5 M123.0 24.07 H127.2 M6.4 27.43 H8.3 M10.1 27.43 H15.8 M18.6 27.43 H27.8 M54.9 27.43 H59.1 M70.1 27.43 H71.8 M105.8 27.43 H110.0 M114.3 27.43 H118.5 M6.4 30.78 H8.3 M10.1 30.78 H15.8 M18.6 30.78 H29.8 M54.9 30.78 H59.1 M70.1 30.78 H71.8 M105.8 30.78 H110.0 M114.3 30.78 H118.5 M123.0 30.78 H127.2 M6.4 34.12 H8.3 M10.1 34.12 H15.8 M18.6 34.12 H26.8 M54.9 34.12 H59.1 M114.3 34.12 H118.5 M6.4 37.47 H8.3 M10.1 37.47 H15.8 M18.6 37.47 H28.8 M54.9 37.47 H59.1 M70.1 37.47 H71.8 M105.8 37.47 H110.0 M114.3 37.47 H118.5 M123.0 37.47 H127.2 M6.4 40.82 H8.3 M10.1 40.82 H15.8 M18.6 40.82 H30.8 M54.9 40.82 H59.1 M70.1 40.82 H71.8 M105.8 40.82 H110.0 M114.3 40.82 H118.5 M6.4 44.17 H8.3 M10.1 44.17 H15.8 M18.6 44.17 H27.8 M54.9 44.17 H59.1 M114.3 44.17 H118.5 M123.0 44.17 H127.2 M6.4 47.52 H8.3 M10.1 47.52 H15.8 M18.6 47.52 H29.8 M54.9 47.52 H59.1 M70.1 47.52 H71.8 M105.8 47.52 H110.0 M114.3 47.52 H118.5 M6.4 50.88 H8.3 M10.1 50.88 H15.8 M18.6 50.88 H26.8 M54.9 50.88 H59.1 M70.1 50.88 H71.8 M105.8 50.88 H110.0 M114.3 50.88 H118.5 M123.0 50.88 H127.2 M6.4 54.22 H8.3 M10.1 54.22 H15.8 M18.6 54.22 H28.8 M54.9 54.22 H59.1 M114.3 54.22 H118.5 M6.4 57.58 H8.3 M10.1 57.58 H15.8 M18.6 57.58 H30.8 M54.9 57.58 H59.1 M70.1 57.58 H71.8 M105.8 57.58 H110.0 M114.3 57.58 H118.5 M123.0 57.58 H127.2 M6.4 60.92 H8.3 M10.1 60.92 H15.8 M18.6 60.92 H27.8 M54.9 60.92 H59.1 M70.1 60.92 H71.8 M105.8 60.92 H110.0 M114.3 60.92 H118.5 M6.4 64.27 H8.3 M10.1 64.27 H15.8 M18.6 64.27 H29.8 M54.9 64.27 H59.1 M114.3 64.27 H118.5 M123.0 64.27 H127.2 M6.4 67.62 H8.3 M10.1 67.62 H15.8 M18.6 67.62 H26.8 M54.9 67.62 H59.1 M70.1 67.62 H71.8 M105.8 67.62 H110.0 M114.3 67.62 H118.5 M6.4 70.97 H8.3 M10.1 70.97 H15.8 M18.6 70.97 H28.8 M54.9 70.97 H59.1 M70.1 70.97 H71.8 M105.8 70.97 H110.0 M114.3 70.97 H118.5 M123.0 70.97 H127.2 M6.4 74.33 H8.3 M10.1 74.33 H15.8 M18.6 74.33 H30.8 M54.9 74.33 H59.1 M114.3 74.33 H118.5 M6.4 77.67 H8.3 M10.1 77.67 H15.8 M18.6 77.67 H27.8 M54.9 77.67 H59.1 M70.1 77.67 H71.8 M105.8 77.67 H110.0 M114.3 77.67 H118.5 M123.0 77.67 H127.2 M6.4 81.02 H8.3 M10.1 81.02 H15.8 M18.6 81.02 H29.8 M54.9 81.02 H59.1 M70.1 81.02 H71.8 M105.8 81.02 H110.0 M114.3 81.02 H118.5 M6.4 84.38 H8.3 M10.1 84.38 H15.8 M18.6 84.38 H26.8 M54.9 84.38 H59.1 M114.3 84.38 H118.5 M123.0 84.38 H127.2" stroke="#777" stroke-width="1.3"/><path d="M10.6 10.7 H16.6 M23.1 10.7 H29.1 M44.1 12.5 H50.1 M63.2 12.5 H69.2 M76.0 12.5 H82.0 M95.1 12.5 H101.1 M112.5 9.7 H117.5 M113.0 11.7 H117.0 M121.2 9.7 H126.2 M121.7 11.7 H125.7 M128.9 9.7 H133.9 M129.4 11.7 H133.4" stroke="#666" stroke-width=".8"/><path d="M5.4 5.7 H134.9 M34.4 9.1 H110.8 M5.4 15.70 H134.9 M5.4 19.05 H134.9 M5.4 22.40 H134.9 M5.4 25.75 H134.9 M5.4 29.10 H134.9 M5.4 32.45 H134.9 M5.4 35.80 H134.9 M5.4 39.15 H134.9 M5.4 42.50 H134.9 M5.4 45.85 H134.9 M5.4 49.20 H134.9 M5.4 52.55 H134.9 M5.4 55.90 H134.9 M5.4 59.25 H134.9 M5.4 62.60 H134.9 M5.4 65.95 H134.9 M5.4 69.30 H134.9 M5.4 72.65 H134.9 M5.4 76.00 H134.9 M5.4 79.35 H134.9 M5.4 82.70 H134.9 M5.4 86.05 H134.9 M5.4 5.70 V86.05 M9.3 5.70 V86.05 M17.8 5.70 V86.05 M34.4 5.70 V86.05 M59.9 5.70 V86.05 M72.6 9.10 V86.05 M85.4 9.10 V86.05 M110.8 5.70 V86.05 M119.3 5.70 V86.05 M128 5.70 V86.05 M134.9 5.70 V86.05" stroke="#050505" stroke-width="1.05"/><path d="M5.4 89.2 H52" stroke="#666" stroke-width=".7"/><path d="M132 93 H133.5" stroke="#888" stroke-width=".7"/></svg></div><div class="t" style="left:71.8px;top:283.0px;width:140.5px;text-align:center;color:#fff;font-size:13px;font-weight:bold;letter-spacing:.3px">2</div><div class="abs" style="left:71.8px;top:319.5px;width:140.5px;height:99px;opacity:.5;"><svg class="abs" style="left:0;top:0" width="140.5" height="99" viewBox="0 0 140.5 99" fill="none"><rect width="140.5" height="99" fill="#fff"/><path d="M98 6 H108 M32 9.2 H44 M97 9.2 H109" stroke="#666" stroke-width=".8"/><path d="M132 93 H133.5" stroke="#888" stroke-width=".7"/></svg></div><div class="t" style="left:71.8px;top:431.0px;width:140.5px;text-align:center;color:#fff;font-size:13px;font-weight:bold;letter-spacing:.3px">3</div><div class="abs" style="left:71.8px;top:467.7px;width:140.5px;height:99px;opacity:.5;"><svg class="abs" style="left:0;top:0" width="140.5" height="99" viewBox="0 0 140.5 99" fill="none"><rect width="140.5" height="99" fill="#fff"/><path d="M5.7 9.6 H34.7" stroke="#555" stroke-width=".7"/><path d="M55.3 15 H84.3" stroke="#333" stroke-width="1.1"/><path d="M60 18.2 H80" stroke="#777" stroke-width=".7"/><rect x="5.4" y="23.2" width="129.5" height="10.0" fill="#d4d4d4"/><path d="M6.4 34.88 H8.3 M10.1 34.88 H15.8 M18.6 34.88 H26.8 M54.9 34.88 H59.1 M70.1 34.88 H71.8 M105.8 34.88 H110.0 M114.3 34.88 H118.5 M123.0 34.88 H127.2 M6.4 38.23 H8.3 M10.1 38.23 H15.8 M18.6 38.23 H28.8 M54.9 38.23 H59.1 M70.1 38.23 H71.8 M105.8 38.23 H110.0 M114.3 38.23 H118.5 M6.4 41.58 H8.3 M10.1 41.58 H15.8 M18.6 41.58 H30.8 M54.9 41.58 H59.1 M114.3 41.58 H118.5 M123.0 41.58 H127.2 M6.4 44.92 H8.3 M10.1 44.92 H15.8 M18.6 44.92 H27.8 M54.9 44.92 H59.1 M70.1 44.92 H71.8 M105.8 44.92 H110.0 M114.3 44.92 H118.5 M6.4 48.27 H8.3 M10.1 48.27 H15.8 M18.6 48.27 H29.8 M54.9 48.27 H59.1 M70.1 48.27 H71.8 M105.8 48.27 H110.0 M114.3 48.27 H118.5 M123.0 48.27 H127.2 M6.4 51.62 H8.3 M10.1 51.62 H15.8 M18.6 51.62 H26.8 M54.9 51.62 H59.1 M114.3 51.62 H118.5 M6.4 54.98 H8.3 M10.1 54.98 H15.8 M18.6 54.98 H28.8 M54.9 54.98 H59.1 M70.1 54.98 H71.8 M105.8 54.98 H110.0 M114.3 54.98 H118.5 M123.0 54.98 H127.2 M6.4 58.33 H8.3 M10.1 58.33 H15.8 M18.6 58.33 H30.8 M54.9 58.33 H59.1 M70.1 58.33 H71.8 M105.8 58.33 H110.0 M114.3 58.33 H118.5 M6.4 61.67 H8.3 M10.1 61.67 H15.8 M18.6 61.67 H27.8 M54.9 61.67 H59.1 M114.3 61.67 H118.5 M123.0 61.67 H127.2 M6.4 65.03 H8.3 M10.1 65.03 H15.8 M18.6 65.03 H29.8 M54.9 65.03 H59.1 M70.1 65.03 H71.8 M105.8 65.03 H110.0 M114.3 65.03 H118.5 M6.4 68.38 H8.3 M10.1 68.38 H15.8 M18.6 68.38 H26.8 M54.9 68.38 H59.1 M70.1 68.38 H71.8 M105.8 68.38 H110.0 M114.3 68.38 H118.5 M123.0 68.38 H127.2 M6.4 71.73 H8.3 M10.1 71.73 H15.8 M18.6 71.73 H28.8 M54.9 71.73 H59.1 M114.3 71.73 H118.5 M6.4 75.08 H8.3 M10.1 75.08 H15.8 M18.6 75.08 H30.8 M54.9 75.08 H59.1 M70.1 75.08 H71.8 M105.8 75.08 H110.0 M114.3 75.08 H118.5 M123.0 75.08 H127.2 M6.4 78.42 H8.3 M10.1 78.42 H15.8 M18.6 78.42 H27.8 M54.9 78.42 H59.1 M70.1 78.42 H71.8 M105.8 78.42 H110.0 M114.3 78.42 H118.5 M6.4 81.77 H8.3 M10.1 81.77 H15.8 M18.6 81.77 H29.8 M54.9 81.77 H59.1 M114.3 81.77 H118.5 M123.0 81.77 H127.2 M6.4 85.12 H8.3 M10.1 85.12 H15.8 M18.6 85.12 H26.8 M54.9 85.12 H59.1 M70.1 85.12 H71.8 M105.8 85.12 H110.0 M114.3 85.12 H118.5 M6.4 88.48 H8.3 M10.1 88.48 H15.8 M18.6 88.48 H28.8 M54.9 88.48 H59.1 M70.1 88.48 H71.8 M105.8 88.48 H110.0 M114.3 88.48 H118.5 M123.0 88.48 H127.2" stroke="#777" stroke-width="1.3"/><path d="M10.6 28.2 H16.6 M23.1 28.2 H29.1 M44.1 30.0 H50.1 M63.2 30.0 H69.2 M76.0 30.0 H82.0 M95.1 30.0 H101.1 M112.5 27.2 H117.5 M113.0 29.2 H117.0 M121.2 27.2 H126.2 M121.7 29.2 H125.7 M128.9 27.2 H133.9 M129.4 29.2 H133.4" stroke="#666" stroke-width=".8"/><path d="M5.4 23.2 H134.9 M34.4 26.599999999999998 H110.8 M5.4 33.20 H134.9 M5.4 36.55 H134.9 M5.4 39.90 H134.9 M5.4 43.25 H134.9 M5.4 46.60 H134.9 M5.4 49.95 H134.9 M5.4 53.30 H134.9 M5.4 56.65 H134.9 M5.4 60.00 H134.9 M5.4 63.35 H134.9 M5.4 66.70 H134.9 M5.4 70.05 H134.9 M5.4 73.40 H134.9 M5.4 76.75 H134.9 M5.4 80.10 H134.9 M5.4 83.45 H134.9 M5.4 86.80 H134.9 M5.4 90.15 H134.9 M5.4 23.20 V90.15 M9.3 23.20 V90.15 M17.8 23.20 V90.15 M34.4 23.20 V90.15 M59.9 23.20 V90.15 M72.6 26.60 V90.15 M85.4 26.60 V90.15 M110.8 23.20 V90.15 M119.3 23.20 V90.15 M128 23.20 V90.15 M134.9 23.20 V90.15" stroke="#050505" stroke-width="1.05"/><path d="M132 93 H133.5" stroke="#888" stroke-width=".7"/></svg></div><div class="t" style="left:71.8px;top:579.2px;width:140.5px;text-align:center;color:#fff;font-size:13px;font-weight:bold;letter-spacing:.3px">4</div><div class="abs" style="left:71.8px;top:615.8px;width:140.5px;height:99px;opacity:.5;"><svg class="abs" style="left:0;top:0" width="140.5" height="99" viewBox="0 0 140.5 99" fill="none"><rect width="140.5" height="99" fill="#fff"/><rect x="5.4" y="5.7" width="129.5" height="10.0" fill="#d4d4d4"/><path d="M6.4 17.38 H8.3 M10.1 17.38 H15.8 M18.6 17.38 H26.8 M54.9 17.38 H59.1 M70.1 17.38 H71.8 M105.8 17.38 H110.0 M114.3 17.38 H118.5 M123.0 17.38 H127.2 M6.4 20.73 H8.3 M10.1 20.73 H15.8 M18.6 20.73 H28.8 M54.9 20.73 H59.1 M70.1 20.73 H71.8 M105.8 20.73 H110.0 M114.3 20.73 H118.5 M6.4 24.07 H8.3 M10.1 24.07 H15.8 M18.6 24.07 H30.8 M54.9 24.07 H59.1 M114.3 24.07 H118.5 M123.0 24.07 H127.2 M6.4 27.43 H8.3 M10.1 27.43 H15.8 M18.6 27.43 H27.8 M54.9 27.43 H59.1 M70.1 27.43 H71.8 M105.8 27.43 H110.0 M114.3 27.43 H118.5 M6.4 30.78 H8.3 M10.1 30.78 H15.8 M18.6 30.78 H29.8 M54.9 30.78 H59.1 M70.1 30.78 H71.8 M105.8 30.78 H110.0 M114.3 30.78 H118.5 M123.0 30.78 H127.2 M6.4 34.12 H8.3 M10.1 34.12 H15.8 M18.6 34.12 H26.8 M54.9 34.12 H59.1 M114.3 34.12 H118.5 M6.4 37.47 H8.3 M10.1 37.47 H15.8 M18.6 37.47 H28.8 M54.9 37.47 H59.1 M70.1 37.47 H71.8 M105.8 37.47 H110.0 M114.3 37.47 H118.5 M123.0 37.47 H127.2 M6.4 40.82 H8.3 M10.1 40.82 H15.8 M18.6 40.82 H30.8 M54.9 40.82 H59.1 M70.1 40.82 H71.8 M105.8 40.82 H110.0 M114.3 40.82 H118.5 M6.4 44.17 H8.3 M10.1 44.17 H15.8 M18.6 44.17 H27.8 M54.9 44.17 H59.1 M114.3 44.17 H118.5 M123.0 44.17 H127.2 M6.4 47.52 H8.3 M10.1 47.52 H15.8 M18.6 47.52 H29.8 M54.9 47.52 H59.1 M70.1 47.52 H71.8 M105.8 47.52 H110.0 M114.3 47.52 H118.5 M6.4 50.88 H8.3 M10.1 50.88 H15.8 M18.6 50.88 H26.8 M54.9 50.88 H59.1 M70.1 50.88 H71.8 M105.8 50.88 H110.0 M114.3 50.88 H118.5 M123.0 50.88 H127.2 M6.4 54.22 H8.3 M10.1 54.22 H15.8 M18.6 54.22 H28.8 M54.9 54.22 H59.1 M114.3 54.22 H118.5 M6.4 57.58 H8.3 M10.1 57.58 H15.8 M18.6 57.58 H30.8 M54.9 57.58 H59.1 M70.1 57.58 H71.8 M105.8 57.58 H110.0 M114.3 57.58 H118.5 M123.0 57.58 H127.2 M6.4 60.92 H8.3 M10.1 60.92 H15.8 M18.6 60.92 H27.8 M54.9 60.92 H59.1 M70.1 60.92 H71.8 M105.8 60.92 H110.0 M114.3 60.92 H118.5 M6.4 64.27 H8.3 M10.1 64.27 H15.8 M18.6 64.27 H29.8 M54.9 64.27 H59.1 M114.3 64.27 H118.5 M123.0 64.27 H127.2 M6.4 67.62 H8.3 M10.1 67.62 H15.8 M18.6 67.62 H26.8 M54.9 67.62 H59.1 M70.1 67.62 H71.8 M105.8 67.62 H110.0 M114.3 67.62 H118.5 M6.4 70.97 H8.3 M10.1 70.97 H15.8 M18.6 70.97 H28.8 M54.9 70.97 H59.1 M70.1 70.97 H71.8 M105.8 70.97 H110.0 M114.3 70.97 H118.5 M123.0 70.97 H127.2 M6.4 74.33 H8.3 M10.1 74.33 H15.8 M18.6 74.33 H30.8 M54.9 74.33 H59.1 M114.3 74.33 H118.5 M6.4 77.67 H8.3 M10.1 77.67 H15.8 M18.6 77.67 H27.8 M54.9 77.67 H59.1 M70.1 77.67 H71.8 M105.8 77.67 H110.0 M114.3 77.67 H118.5 M123.0 77.67 H127.2 M6.4 81.02 H8.3 M10.1 81.02 H15.8 M18.6 81.02 H29.8 M54.9 81.02 H59.1 M70.1 81.02 H71.8 M105.8 81.02 H110.0 M114.3 81.02 H118.5 M6.4 84.38 H8.3 M10.1 84.38 H15.8 M18.6 84.38 H26.8 M54.9 84.38 H59.1 M114.3 84.38 H118.5 M123.0 84.38 H127.2" stroke="#777" stroke-width="1.3"/><path d="M10.6 10.7 H16.6 M23.1 10.7 H29.1 M44.1 12.5 H50.1 M63.2 12.5 H69.2 M76.0 12.5 H82.0 M95.1 12.5 H101.1 M112.5 9.7 H117.5 M113.0 11.7 H117.0 M121.2 9.7 H126.2 M121.7 11.7 H125.7 M128.9 9.7 H133.9 M129.4 11.7 H133.4" stroke="#666" stroke-width=".8"/><path d="M5.4 5.7 H134.9 M34.4 9.1 H110.8 M5.4 15.70 H134.9 M5.4 19.05 H134.9 M5.4 22.40 H134.9 M5.4 25.75 H134.9 M5.4 29.10 H134.9 M5.4 32.45 H134.9 M5.4 35.80 H134.9 M5.4 39.15 H134.9 M5.4 42.50 H134.9 M5.4 45.85 H134.9 M5.4 49.20 H134.9 M5.4 52.55 H134.9 M5.4 55.90 H134.9 M5.4 59.25 H134.9 M5.4 62.60 H134.9 M5.4 65.95 H134.9 M5.4 69.30 H134.9 M5.4 72.65 H134.9 M5.4 76.00 H134.9 M5.4 79.35 H134.9 M5.4 82.70 H134.9 M5.4 86.05 H134.9 M5.4 5.70 V86.05 M9.3 5.70 V86.05 M17.8 5.70 V86.05 M34.4 5.70 V86.05 M59.9 5.70 V86.05 M72.6 9.10 V86.05 M85.4 9.10 V86.05 M110.8 5.70 V86.05 M119.3 5.70 V86.05 M128 5.70 V86.05 M134.9 5.70 V86.05" stroke="#050505" stroke-width="1.05"/><path d="M5.4 89.2 H52" stroke="#666" stroke-width=".7"/><path d="M132 93 H133.5" stroke="#888" stroke-width=".7"/></svg></div>
</div>
<!-- thumb scrollbar -->
<div class="sb" style="left:1021px;top:273px;width:17px;height:664px"></div>
<div class="abs" style="left:1023px;top:290px;width:13px;height:309px;background:#c1c1c1"></div>
<svg class="abs" style="left:1021px;top:273.5px" width="17" height="17" viewBox="0 0 17 17"><path d="M8.5 6.2 L12 10.4 H5Z" fill="#a3a3a3"/></svg>
<svg class="abs" style="left:1021px;top:920px" width="17" height="17" viewBox="0 0 17 17"><path d="M8.5 11 L12.5 6 H4.5Z" fill="#505050"/></svg>

<div id="pdfmain">
<div class="page" style="top:3px;height:585px"><div class="abs" style="left:34px;top:31px;width:187px;height:35px;background:linear-gradient(90deg,#ededed,#e9e9e9 45%,#efefef 75%,#eaeaea)"></div><div class="ptitle" style="top:77px">DANH SÁCH THU TIỀN</div><div class="psub" style="top:97px">Đợt 1 tháng 11/2020 - Lớp: 10A</div><svg class="abs" style="left:0;top:0" width="828" height="585" viewBox="0 0 828 585" fill="none" stroke="#0d0d0d" stroke-width="1.4"><rect x="32" y="136" width="763" height="59.3" fill="#d6d6d6" stroke="none"/><path d="M32 136 H795 M32 195.30 H795 M203 156 H653"/><path d="M32 135.30 V196.00 M55 135.30 V196.00 M105 135.30 V196.00 M203 135.30 V196.00 M353 135.30 V196.00 M653 135.30 V196.00 M703 135.30 V196.00 M754 135.30 V196.00 M795 135.30 V196.00 M428 156 V195.30 M503 156 V195.30"/><path d="M32 215.04 H795 M32 234.78 H795 M32 254.52 H795 M32 274.26 H795 M32 294.00 H795 M32 313.74 H795 M32 333.48 H795 M32 353.22 H795 M32 372.96 H795 M32 392.70 H795 M32 412.44 H795 M32 432.18 H795 M32 451.92 H795 M32 471.66 H795 M32 491.40 H795 M32 511.14 H795 M32 530.88 H795 M32 195.30 V531.58 M55 195.30 V531.58 M105 195.30 V531.58 M203 195.30 V531.58 M353 195.30 V531.58 M428 195.30 V531.58 M503 195.30 V531.58 M653 195.30 V531.58 M703 195.30 V531.58 M754 195.30 V531.58 M795 195.30 V531.58"/></svg><div class="hc" style="left:32px;width:23px;top:136.0px;height:59.3px"><span>STT</span></div>
<div class="hc" style="left:55px;width:50px;top:136.0px;height:59.3px"><span>Mã học sinh</span></div>
<div class="hc" style="left:105px;width:98px;top:136.0px;height:59.3px"><span>Họ và tên</span></div>
<div class="hc" style="left:203px;width:150px;top:136.0px;height:20.0px"><span>Nước uống</span></div>
<div class="hc" style="left:203px;width:150px;top:156.0px;height:39.3px"><span>Thành tiền</span></div>
<div class="hc" style="left:353px;width:300px;top:136.0px;height:20.0px"><span>Tiền ăn bán trú</span></div>
<div class="hc" style="left:353px;width:75px;top:156.0px;height:39.3px"><span>Đăng ký</span></div>
<div class="hc" style="left:428px;width:75px;top:156.0px;height:39.3px"><span>Tồn sd</span></div>
<div class="hc" style="left:503px;width:150px;top:156.0px;height:39.3px"><span>Số tiền</span></div>
<div class="hc" style="left:653px;width:50px;top:136.0px;height:59.3px"><span>Tổng số tiền<br>của đợt</span></div>
<div class="hc" style="left:703px;width:51px;top:136.0px;height:59.3px"><span>Số đã thu<br>của đợt</span></div>
<div class="hc" style="left:754px;width:41px;top:136.0px;height:59.3px"><span>Ghi chú</span></div>
<div class="dc c" style="left:32px;width:23px;top:195.30px">1</div>
<div class="dc l" style="left:55px;width:50px;top:195.30px">8zk2jxo1</div>
<div class="dc l" style="left:105px;width:98px;top:195.30px">Nguyễn Việt Hà</div>
<div class="dc r" style="left:203px;width:150px;top:195.30px">10.000</div>
<div class="dc r" style="left:353px;width:75px;top:195.30px">16</div>
<div class="dc r" style="left:503px;width:150px;top:195.30px">47.264</div>
<div class="dc r" style="left:653px;width:50px;top:195.30px">57.264</div>
<div class="dc r" style="left:703px;width:51px;top:195.30px">57.264</div>
<div class="dc c" style="left:32px;width:23px;top:215.04px">2</div>
<div class="dc l" style="left:55px;width:50px;top:215.04px">83qg9j9l</div>
<div class="dc l" style="left:105px;width:98px;top:215.04px">Nguyễn Thị Hà</div>
<div class="dc r" style="left:203px;width:150px;top:215.04px">10.000</div>
<div class="dc r" style="left:353px;width:75px;top:215.04px">16</div>
<div class="dc r" style="left:503px;width:150px;top:215.04px">47.264</div>
<div class="dc r" style="left:653px;width:50px;top:215.04px">57.264</div>
<div class="dc c" style="left:32px;width:23px;top:234.78px">3</div>
<div class="dc l" style="left:55px;width:50px;top:234.78px">81ryx3mm</div>
<div class="dc l" style="left:105px;width:98px;top:234.78px">Lê Văn Hải</div>
<div class="dc r" style="left:203px;width:150px;top:234.78px">10.000</div>
<div class="dc r" style="left:653px;width:50px;top:234.78px">10.000</div>
<div class="dc r" style="left:703px;width:51px;top:234.78px">10.000</div>
<div class="dc c" style="left:32px;width:23px;top:254.52px">4</div>
<div class="dc l" style="left:55px;width:50px;top:254.52px">81ryxp44</div>
<div class="dc l" style="left:105px;width:98px;top:254.52px">Lưu Dương Hải</div>
<div class="dc r" style="left:203px;width:150px;top:254.52px">10.000</div>
<div class="dc r" style="left:353px;width:75px;top:254.52px">16</div>
<div class="dc r" style="left:503px;width:150px;top:254.52px">37.811</div>
<div class="dc r" style="left:653px;width:50px;top:254.52px">47.811</div>
<div class="dc c" style="left:32px;width:23px;top:274.26px">5</div>
<div class="dc l" style="left:55px;width:50px;top:274.26px">6qmxn5qk</div>
<div class="dc l" style="left:105px;width:98px;top:274.26px">Kiều Trung Hiếu</div>
<div class="dc r" style="left:203px;width:150px;top:274.26px">10.000</div>
<div class="dc r" style="left:653px;width:50px;top:274.26px">10.000</div>
<div class="dc r" style="left:703px;width:51px;top:274.26px">10.000</div>
<div class="dc c" style="left:32px;width:23px;top:294.00px">6</div>
<div class="dc l" style="left:55px;width:50px;top:294.00px">6go0gyll</div>
<div class="dc l" style="left:105px;width:98px;top:294.00px">Nguyễn Thị Hoa</div>
<div class="dc r" style="left:203px;width:150px;top:294.00px">10.000</div>
<div class="dc r" style="left:353px;width:75px;top:294.00px">16</div>
<div class="dc r" style="left:503px;width:150px;top:294.00px">47.264</div>
<div class="dc r" style="left:653px;width:50px;top:294.00px">57.264</div>
<div class="dc c" style="left:32px;width:23px;top:313.74px">7</div>
<div class="dc l" style="left:55px;width:50px;top:313.74px">8lrwoyrq</div>
<div class="dc l" style="left:105px;width:98px;top:313.74px">Vũ Văn Hoàng</div>
<div class="dc r" style="left:203px;width:150px;top:313.74px">10.000</div>
<div class="dc r" style="left:353px;width:75px;top:313.74px">16</div>
<div class="dc r" style="left:503px;width:150px;top:313.74px">37.811</div>
<div class="dc r" style="left:653px;width:50px;top:313.74px">47.811</div>
<div class="dc c" style="left:32px;width:23px;top:333.48px">8</div>
<div class="dc l" style="left:55px;width:50px;top:333.48px">83qg9k4o</div>
<div class="dc l" style="left:105px;width:98px;top:333.48px">Đồng Thị Bích Hường</div>
<div class="dc r" style="left:203px;width:150px;top:333.48px">10.000</div>
<div class="dc r" style="left:353px;width:75px;top:333.48px">16</div>
<div class="dc r" style="left:503px;width:150px;top:333.48px">47.264</div>
<div class="dc r" style="left:653px;width:50px;top:333.48px">57.264</div>
<div class="dc r" style="left:703px;width:51px;top:333.48px">57.264</div>
<div class="dc c" style="left:32px;width:23px;top:353.22px">9</div>
<div class="dc l" style="left:55px;width:50px;top:353.22px">7y52lq9z</div>
<div class="dc l" style="left:105px;width:98px;top:353.22px">Nguyễn Thị Huyền</div>
<div class="dc r" style="left:203px;width:150px;top:353.22px">10.000</div>
<div class="dc r" style="left:353px;width:75px;top:353.22px">16</div>
<div class="dc r" style="left:503px;width:150px;top:353.22px">47.264</div>
<div class="dc r" style="left:653px;width:50px;top:353.22px">57.264</div>
<div class="dc r" style="left:703px;width:51px;top:353.22px">57.264</div>
<div class="dc c" style="left:32px;width:23px;top:372.96px">10</div>
<div class="dc l" style="left:55px;width:50px;top:372.96px">7n2znywj</div>
<div class="dc l" style="left:105px;width:98px;top:372.96px">Phạm Thị Thanh Huyền</div>
<div class="dc r" style="left:203px;width:150px;top:372.96px">10.000</div>
<div class="dc r" style="left:653px;width:50px;top:372.96px">10.000</div>
<div class="dc r" style="left:703px;width:51px;top:372.96px">10.000</div>
<div class="dc c" style="left:32px;width:23px;top:392.70px">11</div>
<div class="dc l" style="left:55px;width:50px;top:392.70px">83qg9kvn</div>
<div class="dc l" style="left:105px;width:98px;top:392.70px">Đào Quang Khải</div>
<div class="dc r" style="left:203px;width:150px;top:392.70px">10.000</div>
<div class="dc r" style="left:353px;width:75px;top:392.70px">16</div>
<div class="dc r" style="left:503px;width:150px;top:392.70px">47.264</div>
<div class="dc r" style="left:653px;width:50px;top:392.70px">57.264</div>
<div class="dc c" style="left:32px;width:23px;top:412.44px">12</div>
<div class="dc l" style="left:55px;width:50px;top:412.44px">603lke9v</div>
<div class="dc l" style="left:105px;width:98px;top:412.44px">Đặng Khánh Linh</div>
<div class="dc r" style="left:203px;width:150px;top:412.44px">10.000</div>
<div class="dc r" style="left:353px;width:75px;top:412.44px">16</div>
<div class="dc r" style="left:503px;width:150px;top:412.44px">47.264</div>
<div class="dc r" style="left:653px;width:50px;top:412.44px">57.264</div>
<div class="dc r" style="left:703px;width:51px;top:412.44px">57.264</div>
<div class="dc c" style="left:32px;width:23px;top:432.18px">13</div>
<div class="dc l" style="left:55px;width:50px;top:432.18px">81ryx3xm</div>
<div class="dc l" style="left:105px;width:98px;top:432.18px">Đỗ Thị Kiều Linh</div>
<div class="dc r" style="left:203px;width:150px;top:432.18px">10.000</div>
<div class="dc r" style="left:353px;width:75px;top:432.18px">16</div>
<div class="dc r" style="left:503px;width:150px;top:432.18px">47.264</div>
<div class="dc r" style="left:653px;width:50px;top:432.18px">57.264</div>
<div class="dc c" style="left:32px;width:23px;top:451.92px">14</div>
<div class="dc l" style="left:55px;width:50px;top:451.92px">6wxq35e5</div>
<div class="dc l" style="left:105px;width:98px;top:451.92px">Lê Phương Linh</div>
<div class="dc r" style="left:203px;width:150px;top:451.92px">10.000</div>
<div class="dc r" style="left:353px;width:75px;top:451.92px">16</div>
<div class="dc r" style="left:503px;width:150px;top:451.92px">47.264</div>
<div class="dc r" style="left:653px;width:50px;top:451.92px">57.264</div>
<div class="dc r" style="left:703px;width:51px;top:451.92px">57.264</div>
<div class="dc c" style="left:32px;width:23px;top:471.66px">15</div>
<div class="dc l" style="left:55px;width:50px;top:471.66px">652l9zqv</div>
<div class="dc l" style="left:105px;width:98px;top:471.66px">Trần Thảo Linh</div>
<div class="dc r" style="left:203px;width:150px;top:471.66px">10.000</div>
<div class="dc r" style="left:353px;width:75px;top:471.66px">16</div>
<div class="dc r" style="left:503px;width:150px;top:471.66px">47.264</div>
<div class="dc r" style="left:653px;width:50px;top:471.66px">57.264</div>
<div class="dc c" style="left:32px;width:23px;top:491.40px">16</div>
<div class="dc l" style="left:55px;width:50px;top:491.40px">8dwj9nmj</div>
<div class="dc l" style="left:105px;width:98px;top:491.40px">Trần Tuấn Linh</div>
<div class="dc r" style="left:203px;width:150px;top:491.40px">10.000</div>
<div class="dc r" style="left:353px;width:75px;top:491.40px">16</div>
<div class="dc r" style="left:503px;width:150px;top:491.40px">47.264</div>
<div class="dc r" style="left:653px;width:50px;top:491.40px">57.264</div>
<div class="dc r" style="left:703px;width:51px;top:491.40px">57.264</div>
<div class="dc c" style="left:32px;width:23px;top:511.14px">17</div>
<div class="dc l" style="left:55px;width:50px;top:511.14px">83qg9jkv</div>
<div class="dc l" style="left:105px;width:98px;top:511.14px">Hoàng Tuấn Lộc</div>
<div class="dc r" style="left:203px;width:150px;top:511.14px">10.000</div>
<div class="dc r" style="left:653px;width:50px;top:511.14px">10.000</div><div class="abs" style="left:780px;top:537px;width:13px;text-align:right;font-size:9.5px;line-height:12px">1</div></div>
<div class="page" style="top:598px;height:585px"><svg class="abs" style="left:0;top:0" width="828" height="120" viewBox="0 0 828 120" fill="none" stroke="#0d0d0d" stroke-width="1.4"><rect x="32" y="33.4" width="763" height="59.3" fill="#d6d6d6" stroke="none"/><path d="M32 33.4 H795 M32 92.70 H795 M203 53.4 H653"/><path d="M32 32.70 V93.40 M55 32.70 V93.40 M105 32.70 V93.40 M203 32.70 V93.40 M353 32.70 V93.40 M653 32.70 V93.40 M703 32.70 V93.40 M754 32.70 V93.40 M795 32.70 V93.40 M428 53.4 V92.70 M503 53.4 V92.70"/></svg><div class="hc" style="padding-top:0;left:32px;width:23px;top:33.4px;height:59.3px"><span>STT</span></div>
<div class="hc" style="padding-top:0;left:55px;width:50px;top:33.4px;height:59.3px"><span>Mã học sinh</span></div>
<div class="hc" style="padding-top:0;left:105px;width:98px;top:33.4px;height:59.3px"><span>Họ và tên</span></div>
<div class="hc" style="padding-top:0;left:203px;width:150px;top:33.4px;height:20.0px"><span>Nước uống</span></div>
<div class="hc" style="padding-top:0;left:203px;width:150px;top:53.4px;height:39.3px"><span>Thành tiền</span></div>
<div class="hc" style="padding-top:0;left:353px;width:300px;top:33.4px;height:20.0px"><span>Tiền ăn bán trú</span></div>
<div class="hc" style="padding-top:0;left:353px;width:75px;top:53.4px;height:39.3px"><span>Đăng ký</span></div>
<div class="hc" style="padding-top:0;left:428px;width:75px;top:53.4px;height:39.3px"><span>Tồn sd</span></div>
<div class="hc" style="padding-top:0;left:503px;width:150px;top:53.4px;height:39.3px"><span>Số tiền</span></div>
<div class="hc" style="padding-top:0;left:653px;width:50px;top:33.4px;height:59.3px"><span>Tổng số tiền<br>của đợt</span></div>
<div class="hc" style="padding-top:0;left:703px;width:51px;top:33.4px;height:59.3px"><span>Số đã thu<br>của đợt</span></div>
<div class="hc" style="padding-top:0;left:754px;width:41px;top:33.4px;height:59.3px"><span>Ghi chú</span></div></div>
</div>
<!-- main scrollbar -->
<div class="sb" style="left:1874px;top:273px;width:16px;height:664px"></div>
<div class="abs" style="left:1875.5px;top:290px;width:13px;height:78px;background:#c1c1c1"></div>
<svg class="abs" style="left:1874px;top:273.5px" width="16" height="17" viewBox="0 0 16 17"><path d="M8 6.2 L11.5 10.4 H4.5Z" fill="#a3a3a3"/></svg>
<svg class="abs" style="left:1874px;top:920px" width="16" height="17" viewBox="0 0 16 17"><path d="M8 11 L12 6 H4Z" fill="#505050"/></svg>

<!-- annotation 3 -->
<div class="red" style="left:1531px;top:147px;width:167px;height:63px"></div>
<div class="num" style="left:1527px;top:127px">3</div>

<!-- right blue handle -->
<div class="abs" style="left:1901px;top:464px;width:19px;height:40px;border-radius:5px 0 0 5px;background:#0a6fdd;box-shadow:0 0 4px rgba(0,0,0,.15)"></div>
<svg class="abs" style="left:1906px;top:478px" width="9" height="13" viewBox="0 0 9 13" fill="none" stroke="#fff" stroke-width="2.3" stroke-linecap="round" stroke-linejoin="round"><path d="M6.7 2.3 L2.9 6.5 L6.7 10.7"/></svg>
</div>
</body>
</html>
